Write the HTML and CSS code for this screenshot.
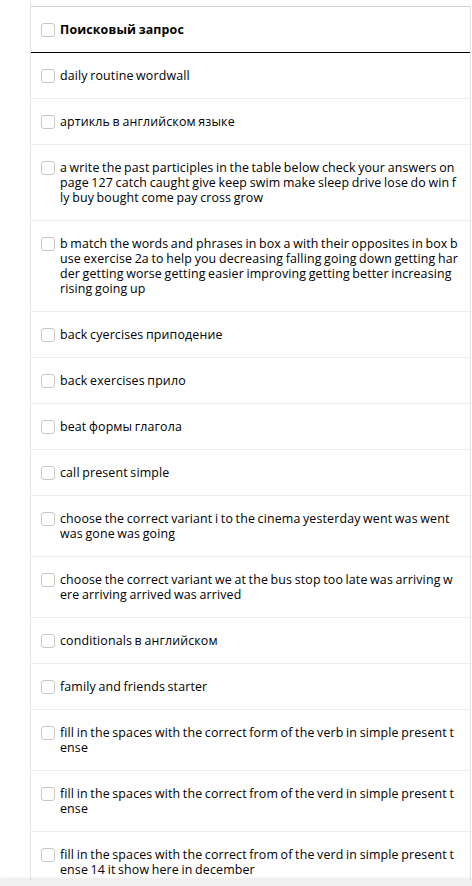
FILE: index.html
```html
<!DOCTYPE html>
<html lang="ru">
<head>
<meta charset="utf-8">
<title>Поисковые запросы</title>
<link rel="stylesheet" href="styles.css">
</head>
<body>
<div class="frame">
  <div class="table">
    <div class="row head">
      <span class="cb"></span>
      <span class="txt">Поисковый запрос</span>
    </div>
    <div class="row"><span class="cb"></span><span class="txt">daily routine wordwall</span></div>
    <div class="row"><span class="cb"></span><span class="txt">артикль в английском языке</span></div>
    <div class="row"><span class="cb"></span><span class="txt">a write the past participles in the table below check your answers on page 127 catch caught give keep swim make sleep drive lose do win fly buy bought come pay cross grow</span></div>
    <div class="row"><span class="cb"></span><span class="txt">b match the words and phrases in box a with their opposites in box b use exercise 2a to help you decreasing falling going down getting harder getting worse getting easier improving getting better increasing rising going up</span></div>
    <div class="row"><span class="cb"></span><span class="txt">back cyercises приподение</span></div>
    <div class="row"><span class="cb"></span><span class="txt">back exercises прило</span></div>
    <div class="row"><span class="cb"></span><span class="txt">beat формы глагола</span></div>
    <div class="row"><span class="cb"></span><span class="txt">call present simple</span></div>
    <div class="row"><span class="cb"></span><span class="txt">choose the correct variant i to the cinema yesterday went was went was gone was going</span></div>
    <div class="row"><span class="cb"></span><span class="txt">choose the correct variant we at the bus stop too late was arriving were arriving arrived was arrived</span></div>
    <div class="row"><span class="cb"></span><span class="txt">conditionals в английском</span></div>
    <div class="row"><span class="cb"></span><span class="txt">family and friends starter</span></div>
    <div class="row"><span class="cb"></span><span class="txt">fill in the spaces with the correct form of the verb in simple present tense</span></div>
    <div class="row"><span class="cb"></span><span class="txt">fill in the spaces with the correct from of the verd in simple present tense</span></div>
    <div class="row"><span class="cb"></span><span class="txt">fill in the spaces with the correct from of the verd in simple present tense 14 it show here in december</span></div>
  </div>
</div>
<div class="scrollbar"></div>
</body>
</html>
```
FILE: styles.css
```css
html, body {
  margin: 0;
  padding: 0;
  background: #fff;
  height: 886px;
  overflow: hidden;
}
body {
  font-family: "Open Sans", "Noto Sans", sans-serif;
  font-size: 12.4px;
  line-height: 15px;
  color: #000;
}
.frame {
  margin-left: 30px;
  width: 440px;
  border-left: 1px solid #e4e4e4;
  padding-top: 6px;
  min-height: 880px;
}
.table {
  border-top: 1px solid #d3d3d3;
  border-right: 1px solid #e4e4e4;
}
.row {
  display: flex;
  align-items: flex-start;
  gap: 5px;
  padding: 15px 11px 15px 10px;
  border-bottom: 1px solid #eeeef2;
}
.row.head {
  border-bottom-color: #000;
  font-weight: bold;
}
.cb {
  flex: 0 0 auto;
  box-sizing: border-box;
  width: 14px;
  height: 14px;
  margin-top: 1px;
  border: 1px solid #c9c9c9;
  border-radius: 3px;
  background: #fff;
}
.txt {
  flex: 1 1 auto;
  word-break: break-all;
  letter-spacing: 0.15px;
  word-spacing: -0.8px;
}
.scrollbar {
  position: fixed;
  left: 0;
  right: 0;
  bottom: 0;
  height: 6px;
  background: #f0f0f0;
  box-shadow: 0 -2px 3px rgba(0, 0, 0, 0.08);
}
```
